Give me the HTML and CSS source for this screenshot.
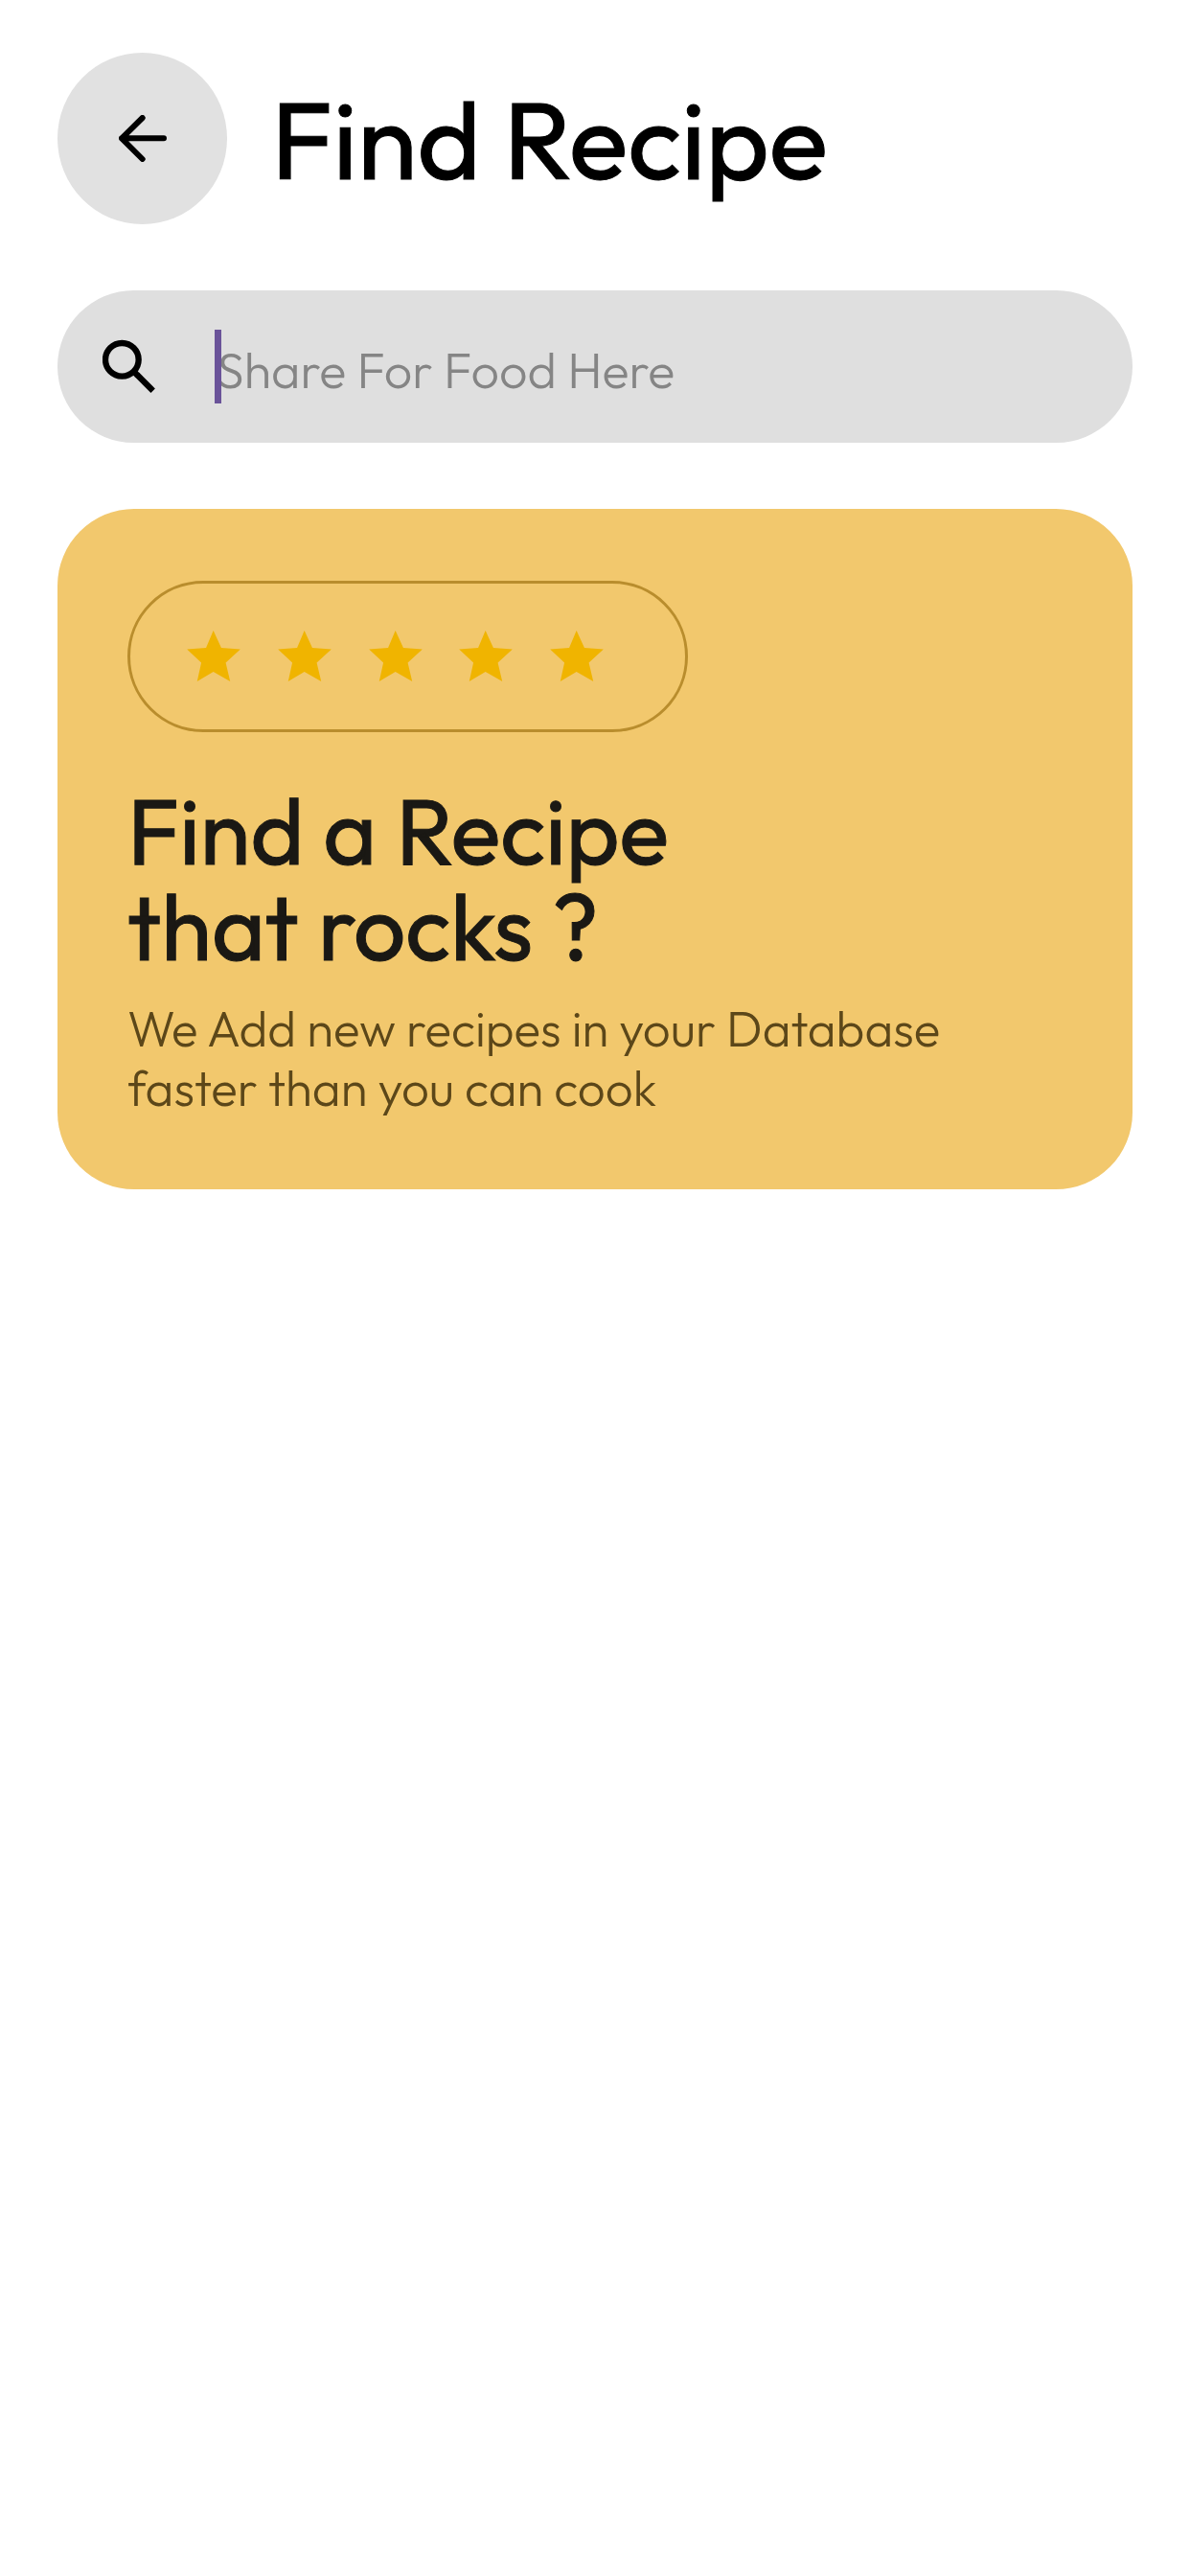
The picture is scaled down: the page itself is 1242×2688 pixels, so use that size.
FILE: index.html
```html
<!DOCTYPE html>
<html lang="en">
<head>
<meta charset="utf-8">
<meta name="viewport" content="width=device-width, initial-scale=1">
<title>Find Recipe</title>
<link rel="stylesheet" href="styles.css">
</head>
<body>
<main class="page">
  <header class="header">
    <button class="back" type="button" aria-label="Back">
      <svg class="back-icon" viewBox="0 0 150 147" aria-hidden="true"><path d="M141 73H9M74 9L9 73l65 65"/></svg>
    </button>
    <h1 class="title">Find Recipe</h1>
  </header>

  <form class="search" role="search">
    <svg class="search-icon" viewBox="0 0 165 168" aria-hidden="true"><circle cx="61" cy="64" r="52"/><path d="M98 101l12 12"/><path d="M108 111l50 50"/></svg>
    <div class="field">
      <input class="search-input" type="text" placeholder="Share For Food Here" aria-label="Search for food">
      <span class="caret"></span>
    </div>
  </form>

  <section class="card">
    <div class="rating" role="img" aria-label="5 stars">
      <svg class="star" viewBox="0 0 168 160"><path d="M83 0l25 54 60 5-46 42 14 59-53-30-51 30 13-59L0 59l60-5z"/></svg>
      <svg class="star" viewBox="0 0 168 160"><path d="M83 0l25 54 60 5-46 42 14 59-53-30-51 30 13-59L0 59l60-5z"/></svg>
      <svg class="star" viewBox="0 0 168 160"><path d="M83 0l25 54 60 5-46 42 14 59-53-30-51 30 13-59L0 59l60-5z"/></svg>
      <svg class="star" viewBox="0 0 168 160"><path d="M83 0l25 54 60 5-46 42 14 59-53-30-51 30 13-59L0 59l60-5z"/></svg>
      <svg class="star" viewBox="0 0 168 160"><path d="M83 0l25 54 60 5-46 42 14 59-53-30-51 30 13-59L0 59l60-5z"/></svg>
    </div>
    <h2 class="card-title">Find a Recipe<br>that rocks ?</h2>
    <p class="card-text">We Add new recipes in your Database<br>faster than you can cook</p>
  </section>
</main>
</body>
</html>
```
FILE: styles.css
```css
* {
  box-sizing: border-box;
}

body {
  margin: 0;
  background: #fff;
  font-family: Outfit, Lato, "Open Sans", sans-serif;
}

.page {
  display: flex;
  flex-direction: column;
  padding: 55px 60px;
}

.header {
  display: flex;
  align-items: center;
  gap: 46px;
  margin-bottom: 69px;
}

.back {
  display: flex;
  align-items: center;
  justify-content: center;
  flex: none;
  width: 177px;
  height: 179px;
  padding: 0;
  border: 0;
  border-radius: 50%;
  background: #e1e1e1;
}

.back-icon {
  width: 50px;
  height: 49px;
  fill: none;
  stroke: #000;
  stroke-width: 18;
  stroke-linecap: round;
  stroke-linejoin: round;
}

.title,
.card-title {
  font-weight: 400;
  -webkit-text-stroke: 1px currentColor;
}

.title {
  margin: 0;
  font-size: 114px;
  line-height: 140px;
  color: #000;
}

.search {
  display: flex;
  align-items: center;
  gap: 62px;
  height: 159px;
  margin-bottom: 69px;
  padding: 0 60px 0 47px;
  border-radius: 80px;
  background: #dfdfdf;
}

.search-icon {
  flex: none;
  width: 55px;
  height: 56px;
  margin-bottom: 2px;
  fill: none;
  stroke: #000;
  stroke-width: 19;
}

.field {
  position: relative;
  flex: 1;
}

.search-input {
  display: block;
  width: 100%;
  height: 77px;
  padding: 6px 0 0 2px;
  border: 0;
  outline: 0;
  background: transparent;
  font-family: inherit;
  font-size: 52px;
  font-weight: 300;
}

.search-input::placeholder {
  color: #858585;
  opacity: 1;
}

.caret {
  position: absolute;
  top: 0;
  left: 0;
  width: 7px;
  height: 77px;
  background: #6a5399;
}

.card {
  padding: 75px 73px;
  border-radius: 80px;
  background: #f2c86d;
}

.rating {
  display: flex;
  align-items: center;
  justify-content: space-between;
  width: 585px;
  max-width: 100%;
  height: 158px;
  padding: 0 85px 2px 59px;
  border: 3px solid #b98d2d;
  border-radius: 80px;
}

.star {
  width: 56px;
  height: 53px;
  fill: #f0b400;
}

.card-title {
  margin: 53px 0 25px;
  font-size: 96px;
  line-height: 100px;
  color: #1a1814;
}

.card-text {
  margin: 0;
  font-size: 51px;
  font-weight: 300;
  line-height: 62px;
  color: #5c4719;
}
```
